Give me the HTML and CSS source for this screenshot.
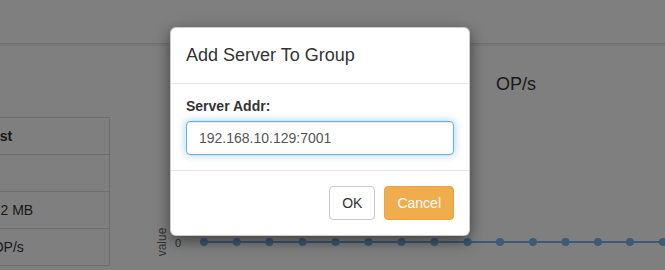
FILE: index.html
```html
<!DOCTYPE html>
<html>
<head>
<meta charset="utf-8">
<link rel="stylesheet" href="styles.css">
</head>
<body>
<div class="topbar"></div>
<div class="content">
  <div class="stats">
    <table class="stable">
      <tr><th>Host</th></tr>
      <tr><td>&nbsp;</td></tr>
      <tr><td>12.2 MB</td></tr>
      <tr><td>0 OP/s</td></tr>
    </table>
  </div>
  <div class="chart">
    <svg class="chart-svg" width="555" height="226" viewBox="0 0 555 226">
      <text x="386" y="46" class="c-title">OP/s</text>
      <text x="0" y="0" class="c-axis" transform="translate(56 198) rotate(-90)" text-anchor="middle">value</text>
      <text x="71" y="203" class="c-tick" text-anchor="end">0</text>
      <line x1="94" y1="198" x2="560" y2="198" class="c-line"/>
      <g class="c-dots">
        <circle cx="94" cy="198" r="4"/>
        <circle cx="126.7" cy="198" r="4"/>
        <circle cx="159.3" cy="198" r="4"/>
        <circle cx="192.5" cy="198" r="4"/>
        <circle cx="225.5" cy="198" r="4"/>
        <circle cx="258.5" cy="198" r="4"/>
        <circle cx="291.5" cy="198" r="4"/>
        <circle cx="324.5" cy="198" r="4"/>
        <circle cx="357.5" cy="198" r="4"/>
        <circle cx="390" cy="198" r="4"/>
        <circle cx="423" cy="198" r="4"/>
        <circle cx="455.5" cy="198" r="4"/>
        <circle cx="488" cy="198" r="4"/>
        <circle cx="520" cy="198" r="4"/>
        <circle cx="553" cy="198" r="4"/>
      </g>
    </svg>
  </div>
</div>
<div class="backdrop"></div>
<div class="modal">
  <div class="modal-header">
    <h4 class="modal-title">Add Server To Group</h4>
  </div>
  <div class="modal-body">
    <label class="field-label">Server Addr:</label>
    <input class="field-input" type="text" value="192.168.10.129:7001">
  </div>
  <div class="modal-footer">
    <button class="btn btn-default">OK</button>
    <button class="btn btn-warning">Cancel</button>
  </div>
</div>
</body>
</html>
```
FILE: styles.css
```css
* { box-sizing: border-box; }
html, body { margin: 0; padding: 0; }
body {
  width: 665px;
  height: 270px;
  overflow: hidden;
  background: #fff;
  font-family: "Liberation Sans", Arial, sans-serif;
  font-size: 14px;
  line-height: 1.42857;
  color: #333;
  position: relative;
}
.topbar {
  height: 44px;
  border-bottom: 1px solid #e4e4e4;
  box-shadow: 0 2px 0 #f0f0f0;
}
.content {
  display: flex;
}
.stats {
  width: 110px;
  flex: none;
  overflow: hidden;
  padding-top: 73px;
}
.stable {
  margin-left: -28px;
  width: 138px;
  border-collapse: collapse;
}
.stable th, .stable td {
  border: 1px solid #ddd;
  padding: 8px;
  line-height: 20px;
  text-align: left;
  white-space: nowrap;
}
.stable th { font-weight: bold; }
.chart { flex: 1; }
.chart-svg { display: block; }
.c-title { font-family: "Liberation Sans", Arial, sans-serif; font-size: 18px; fill: #333; }
.c-axis { font-family: "Liberation Sans", Arial, sans-serif; font-size: 12px; fill: #666; }
.c-tick { font-family: "Liberation Sans", Arial, sans-serif; font-size: 11px; fill: #666; }
.c-line { stroke: #7cb5ec; stroke-width: 2; }
.c-dots circle { fill: #7cb5ec; }
.backdrop {
  position: absolute;
  inset: 0;
  background: rgba(0,0,0,0.5);
}
.modal {
  position: absolute;
  left: 170px;
  top: 27px;
  width: 300px;
  background: #fff;
  border: 1px solid rgba(0,0,0,0.2);
  border-radius: 6px;
  box-shadow: 0 5px 15px rgba(0,0,0,0.5);
}
.modal-header {
  padding: 15px;
  border-bottom: 1px solid #e5e5e5;
}
.modal-title {
  margin: 0;
  font-size: 18px;
  font-weight: 500;
  line-height: 25px;
}
.modal-body {
  padding: 12px 15px 15px;
}
.field-label {
  display: block;
  line-height: 20px;
  margin-bottom: 5px;
  font-weight: bold;
}
.field-input {
  display: block;
  width: 100%;
  height: 34px;
  padding: 6px 12px;
  font-family: "Liberation Sans", Arial, sans-serif;
  font-size: 14px;
  color: #555;
  background: #fff;
  border: 1px solid #66afe9;
  border-radius: 4px;
  outline: 0;
  box-shadow: inset 0 1px 1px rgba(0,0,0,.075), 0 0 8px rgba(102,175,233,.6);
}
.modal-footer {
  padding: 15px;
  border-top: 1px solid #e5e5e5;
  display: flex;
  justify-content: flex-end;
  gap: 9px;
}
.btn {
  height: 34px;
  padding: 6px 12px;
  font-family: "Liberation Sans", Arial, sans-serif;
  font-size: 14px;
  line-height: 20px;
  border-radius: 4px;
  border: 1px solid transparent;
}
.btn-default {
  color: #333;
  background: #fff;
  border-color: #ccc;
}
.btn-warning {
  color: #fff;
  background: #f0ad4e;
  border-color: #eea236;
}
```
